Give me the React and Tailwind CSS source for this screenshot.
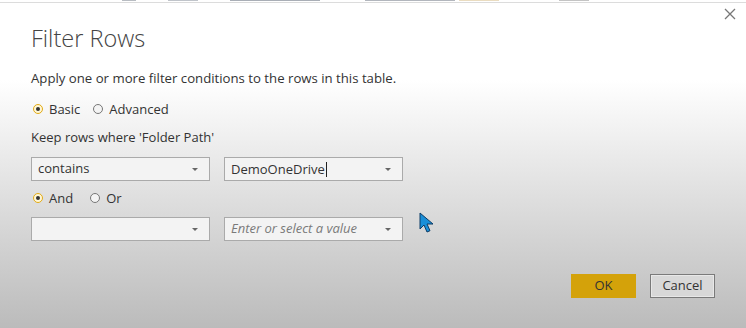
import React from 'react';

function Radio({ checked, label }) {
  return (
    <label className="flex items-center gap-[6px]">
      {checked ? (
        <span className="flex h-[10px] w-[10px] items-center justify-center rounded-full border-[1.5px] border-[#e2aa16] bg-[#fff7d6]">
          <span className="h-[4px] w-[4px] rounded-full bg-[#333]" />
        </span>
      ) : (
        <span className="h-[10px] w-[10px] rounded-full border-[1.5px] border-[#777] bg-[#f4f4f4]" />
      )}
      <span>{label}</span>
    </label>
  );
}

function Select({ value, placeholder, caret }) {
  return (
    <div className="flex h-[24px] w-[179px] items-center justify-between border border-[#aaa] bg-[#f3f3f3] pl-[6px] pr-[11px]">
      {value ? (
        <span className="text-[13px] text-[#333]">
          {value}
          {caret && <span className="ml-[1px] inline-block h-[15px] w-[1px] translate-y-[3px] bg-[#222]" />}
        </span>
      ) : (
        <span className="text-[13px] italic text-[#7a7a7a]">{placeholder}</span>
      )}
      <svg width="6" height="3" viewBox="0 0 6 3">
        <path d="M0 0h6L3 3z" fill="#666" />
      </svg>
    </div>
  );
}

export default function App() {
  return (
    <div
      className="relative h-[328px] w-[746px] overflow-hidden bg-[linear-gradient(to_bottom,#ffffff_0px,#ffffff_80px,#bbbbbb_328px)] text-[#333]"
      style={{ fontFamily: '"Open Sans", "Liberation Sans", sans-serif' }}
    >
      {/* bit of the table behind the dialog */}
      <div className="flex h-[3px] items-start border-b border-[#dcdcdc] bg-white">
        <div className="ml-[122px] h-[1px] w-[14px] bg-[#b8bcc2]" />
        <div className="ml-[32px] h-[1px] w-[30px] bg-[#c0c4ca]" />
        <div className="ml-[32px] h-[1px] w-[90px] bg-[#a9aeb6]" />
        <div className="ml-[45px] h-[1px] w-[90px] bg-[#b2b6bd]" />
        <div className="ml-[4px] h-[1px] w-[40px] bg-[#eadcc0]" />
        <div className="ml-[60px] h-[1px] w-[30px] bg-[#c4c4c4]" />
      </div>

      <button className="absolute right-[10px] top-[8px] text-[#777]">
        <svg width="12" height="12" viewBox="0 0 12 12">
          <path d="M1 1l10 10M11 1L1 11" stroke="#777" strokeWidth="1.3" />
        </svg>
      </button>

      <div className="flex flex-col pl-[31px]">
        <h1 className="mt-[18px] text-[23.5px] font-light leading-[34px] text-[#444]">Filter Rows</h1>
        <p className="mt-[14px] text-[13.2px] leading-[18px]">Apply one or more filter conditions to the rows in this table.</p>

        <div className="mt-[13px] flex gap-[13px] pl-[2px] text-[13px] leading-[18px]">
          <Radio checked label="Basic" />
          <Radio label="Advanced" />
        </div>

        <p className="mt-[10px] text-[13px] leading-[18px]">Keep rows where 'Folder Path'</p>

        <div className="mt-[11px] flex gap-[14px]">
          <Select value="contains" />
          <Select value="DemoOneDrive" caret />
        </div>

        <div className="mt-[8px] flex gap-[17px] pl-[2px] text-[13px] leading-[18px]">
          <Radio checked label="And" />
          <Radio label="Or" />
        </div>

        <div className="mt-[10px] flex items-start gap-[14px]">
          <Select value="" placeholder="" />
          <Select placeholder="Enter or select a value" />
          <svg className="ml-[2px] mt-[-5px]" width="16" height="22" viewBox="0 0 16 22">
            <path d="M1 1v16l4-4 3 7 3-1.3-3-6.7h6z" fill="#1a8fd8" stroke="#0d3c66" strokeWidth="1" />
          </svg>
        </div>

        <div className="mt-[33px] flex justify-end gap-[14px] pr-[31px]">
          <button className="h-[24px] w-[65px] bg-[#d4a20a] text-[13px] text-[#333]">OK</button>
          <button className="h-[24px] w-[65px] border border-[#7a7a7a] bg-[#d8d8d8] text-[13px] text-[#333] shadow-[inset_0_0_0_1px_#e8e8e8]">Cancel</button>
        </div>
      </div>
    </div>
  );
}
